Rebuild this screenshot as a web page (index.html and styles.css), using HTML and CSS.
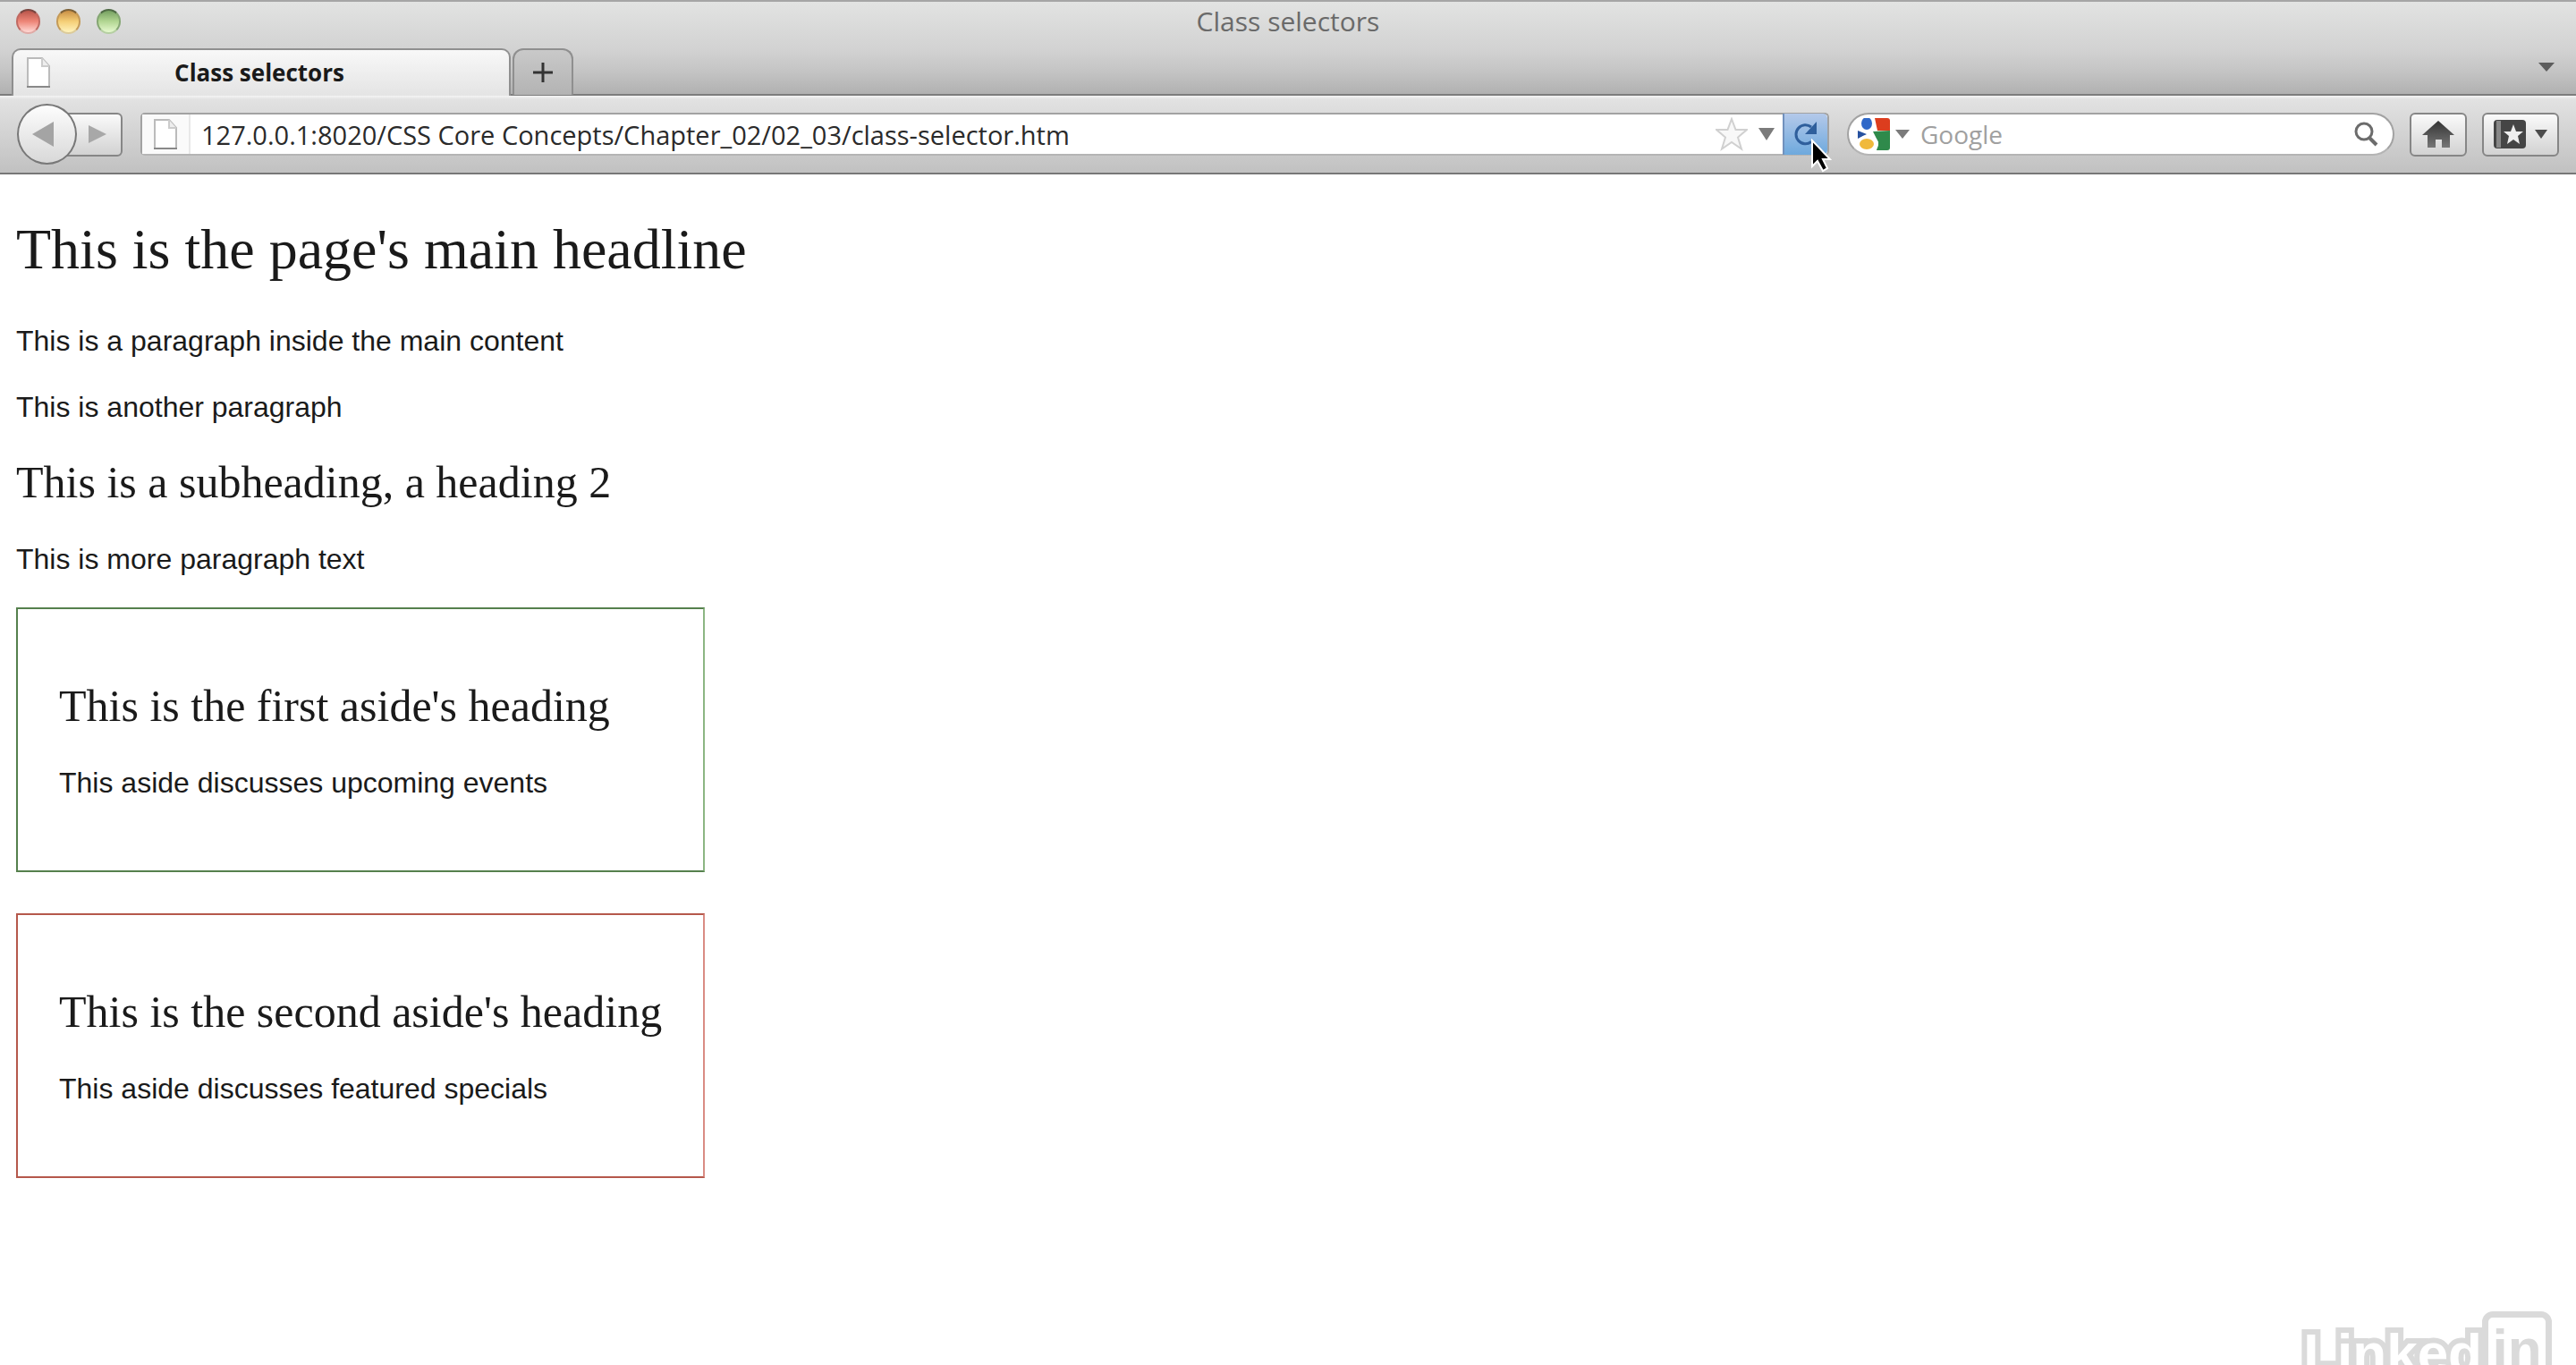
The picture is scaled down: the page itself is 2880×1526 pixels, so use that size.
FILE: index.html
```html
<!DOCTYPE html>
<html lang="en">
<head>
<meta charset="utf-8">
<title>Class selectors</title>
<link rel="stylesheet" href="styles.css">
</head>
<body>
<header class="chrome">
  <div class="titlebar">
    <div class="lights">
      <button class="light red" aria-label="Close"></button>
      <button class="light yellow" aria-label="Minimize"></button>
      <button class="light green" aria-label="Zoom"></button>
    </div>
    <div class="window-title">Class selectors</div>
  </div>
  <div class="tabs">
    <button class="tab">
      <svg class="page-icon" viewBox="0 0 28 36"><path d="M2 2h16l8 9v23H2z" fill="#fff" stroke="#bbb" stroke-width="2"/><path d="M18 2v9h8" fill="#eee" stroke="#ccc" stroke-width="2"/><path d="M1 34h26" stroke="#888" stroke-width="2"/></svg>
      <span class="tab-label">Class selectors</span>
    </button>
    <button class="new-tab" aria-label="New tab"><svg viewBox="0 0 24 24" width="24" height="24"><path d="M12 1v22M1 12h22" stroke="#333" stroke-width="3"/></svg></button>
    <button class="all-tabs" aria-label="List all tabs"><svg viewBox="0 0 18 10" width="18" height="10"><path d="M0 0h18l-9 10z" fill="#5c5c5c"/></svg></button>
  </div>
  <div class="toolbar">
    <div class="history">
      <button class="back" aria-label="Back"><svg viewBox="0 0 24 28" width="24" height="28"><path d="M24 0v28L0 14z" fill="#a4a4a4"/></svg></button>
      <button class="forward" aria-label="Forward"><svg viewBox="0 0 20 20" width="20" height="20"><path d="M0 0v20l20-10z" fill="#a8a8a8"/></svg></button>
    </div>
    <form class="location">
      <span class="identity"><svg class="page-icon" viewBox="0 0 28 36"><path d="M2 2h16l8 9v23H2z" fill="#fff" stroke="#bbb" stroke-width="2"/><path d="M18 2v9h8" fill="#eee" stroke="#ccc" stroke-width="2"/><path d="M1 34h26" stroke="#888" stroke-width="2"/></svg></span>
      <input class="url" type="text" aria-label="Address" value="127.0.0.1:8020/CSS Core Concepts/Chapter_02/02_03/class-selector.htm">
      <button class="plain" type="button" aria-label="Bookmark this page"><svg viewBox="0 0 36 38" width="36" height="38"><path d="M18 2l4.500 12H35l-10 8.500 4 13-11-7.500-11 7.500 4-13L1 14h12.500z" fill="#f8f8f8" stroke="#d0d0d0" stroke-width="2"/></svg></button>
      <button class="plain" type="button" aria-label="Show history"><svg viewBox="0 0 18 14" width="18" height="14"><path d="M0 0h18l-9 14z" fill="#7b7b7b"/></svg></button>
      <button class="reload" type="button" aria-label="Reload">
        <svg viewBox="0 0 28 28" width="28" height="28"><path d="M20 22.500A10.500 10.500 0 1 1 20 6" fill="none" stroke="#2f5f9c" stroke-width="3"/><path d="M26 0v14H13z" fill="#2f5f9c"/></svg>
        <svg class="cursor" viewBox="0 0 24 38" width="24" height="38"><path d="M2 2v29l6-6 6 11 5-3-5-10h8z" fill="#000" stroke="#fff" stroke-width="2"/></svg>
      </button>
    </form>
    <form class="search">
      <button class="engine" type="button" aria-label="Search engine">
        <svg viewBox="0 0 36 36" width="36" height="36"><rect width="36" height="36" rx="3" fill="#fff"/><path d="M19 0h14q3 0 3 3v11H22z" fill="#dc3d1e"/><path d="M17 15l19-1v19q0 3-3 3H21l2-9z" fill="#2f8a4b"/><path d="M0 14l10 4-10 5z" fill="#2752a0"/><circle cx="10" cy="6" r="9" fill="#fff"/><ellipse cx="10" cy="6" rx="6" ry="7" fill="#2f68c8"/><ellipse cx="11" cy="29" rx="12" ry="10" fill="#fff"/><ellipse cx="10" cy="29" rx="8" ry="6" fill="#f0b93c"/></svg>
        <svg viewBox="0 0 16 10" width="16" height="10"><path d="M0 0h16l-8 10z" fill="#7b7b7b"/></svg>
      </button>
      <input class="query" type="text" aria-label="Search" placeholder="Google">
      <button class="plain" type="button" aria-label="Go"><svg viewBox="0 0 28 30" width="28" height="30"><circle cx="12" cy="12" r="9" fill="none" stroke="#6c6c6c" stroke-width="3"/><path d="M18 19l8 8" stroke="#6c6c6c" stroke-width="4"/></svg></button>
    </form>
    <button class="tool home" aria-label="Home"><svg viewBox="0 0 36 30" width="36" height="30"><defs><linearGradient id="ink" x2="0" y2="1"><stop stop-color="#333"/><stop offset="1" stop-color="#777"/></linearGradient></defs><path d="M18 0l18 16h-5v14h-9v-9h-7v9H6V16H0z" fill="url(#ink)"/></svg></button>
    <button class="tool bookmarks" aria-label="Bookmarks">
      <svg viewBox="0 0 36 32" width="36" height="32"><rect width="36" height="32" rx="4" fill="#454545"/><path d="M3 1h5v30H3z" fill="#888"/><path d="M22 5l3 8h8l-6 5 2 9-7-5-7 5 2-9-6-5h8z" fill="#eee"/></svg>
      <svg viewBox="0 0 14 10" width="14" height="10"><path d="M0 0h14l-7 10z" fill="#4c4c4c"/></svg>
    </button>
  </div>
</header>
<main class="page">
  <article class="content">
    <h1>This is the page's main headline</h1>
    <p>This is a paragraph inside the main content</p>
    <p>This is another paragraph</p>
    <h2>This is a subheading, a heading 2</h2>
    <p>This is more paragraph text</p>
  </article>
  <aside class="note events">
    <h2>This is the first aside's heading</h2>
    <p>This aside discusses upcoming events</p>
  </aside>
  <aside class="note specials">
    <h2>This is the second aside's heading</h2>
    <p>This aside discusses featured specials</p>
  </aside>
  <div class="watermark"><span class="linked">Linked</span><span class="in">in</span></div>
</main>
</body>
</html>
```

FILE: styles.css
```css
* { box-sizing: border-box; }

body {
  margin: 0;
  min-height: 100vh;
  display: flex;
  flex-direction: column;
  background: #fff;
  color: #1a1a1a;
  font-family: Arial, "Liberation Sans", sans-serif;
}

button {
  margin: 0;
  padding: 0;
  border: 0;
  background: none;
  font: inherit;
  color: inherit;
}

svg { display: block; flex: none; }

/* Browser window */
.chrome {
  font-family: "Lucida Grande", "Open Sans", sans-serif;
  font-size: 28px;
  border-top: 2px solid #a5a5a5;
  background: linear-gradient(#e2e3e2, #d2d2d2 54px, #c4c4c4 78px, #b0b0b0 104px);
}

.titlebar {
  display: grid;
  grid-template-columns: 1fr auto 1fr;
  height: 52px;
  padding: 0 18px;
}

.lights {
  display: flex;
  gap: 18px;
  padding-top: 8px;
}

.light {
  width: 27px;
  height: 28px;
  border-radius: 50%;
  border: 2px solid;
}

.red { background: linear-gradient(#b9554a, #ee8678 50%, #ffd9d5); border-color: #7a4640 #c06a62 #e0aaa6; }
.yellow { background: linear-gradient(#c98f45, #f5cf77 50%, #fff3bd); border-color: #7e6238 #c49a58 #dccb9a; }
.green { background: linear-gradient(#76a061, #b2d692 50%, #e6f9cf); border-color: #4f6b45 #85a673 #b5cfa2; }

.window-title { color: #6a6a6a; font-size: 30px; line-height: 44px; }

.tabs {
  display: flex;
  align-items: flex-start;
  height: 53px;
  padding: 0 24px 0 13px;
  border-bottom: 2px solid #7d7d7d;
}

.page-icon { width: 28px; height: 36px; }

.tab {
  display: flex;
  align-items: center;
  width: 558px;
  height: 53px;
  padding: 0 14px 2px;
  border: 2px solid #8f8f8f;
  border-bottom: 0;
  border-radius: 10px 10px 0 0;
  background: linear-gradient(#f8f8f8, #e4e4e4);
}

.tab-label {
  flex: 1;
  padding-right: 32px;
  font-size: 26px;
  font-weight: 700;
}

.new-tab {
  display: flex;
  align-items: center;
  justify-content: center;
  width: 68px;
  height: 52px;
  margin-left: 2px;
  border: 2px solid #8f8f8f;
  border-bottom: 0;
  border-radius: 12px 12px 0 0;
  background: linear-gradient(#c9c9c9, #b3b3b3);
}

.all-tabs { margin: 16px 0 0 auto; }

.toolbar {
  display: flex;
  align-items: center;
  height: 88px;
  padding: 0 19px;
  border-bottom: 2px solid #777;
  background: linear-gradient(#f4f4f4, #e2e2e2 4px, #c1c1c1);
}

.history { display: flex; align-items: center; }

.back {
  z-index: 1;
  display: flex;
  align-items: center;
  width: 67px;
  height: 68px;
  padding-left: 15px;
  border: 2px solid #787878;
  border-radius: 50%;
  background: linear-gradient(#fdfdfd, #d8d8d8);
}

.forward {
  display: flex;
  align-items: center;
  width: 64px;
  height: 49px;
  margin-left: -13px;
  padding-left: 24px;
  border: 2px solid #868686;
  border-radius: 0 6px 6px 0;
  background: linear-gradient(#fafafa, #d2d2d2);
}

.location {
  flex: 1;
  display: flex;
  align-items: center;
  gap: 12px;
  min-width: 0;
  height: 48px;
  margin-left: 20px;
  border: 2px solid #a2a2a2;
  border-bottom-color: #b4b4b4;
  border-radius: 5px;
  background: #fff;
}

.identity {
  display: flex;
  align-items: center;
  height: 44px;
  padding: 0 12px;
  border-right: 2px solid #e8e8e8;
  background: #fafafa;
}

.url, .query {
  flex: 1;
  min-width: 0;
  height: 44px;
  padding: 0;
  border: 0;
  outline: 0;
  background: none;
  font: inherit;
  color: #2a2a2a;
}

.url { font-size: 29px; }

.reload {
  position: relative;
  display: flex;
  align-items: center;
  width: 50px;
  height: 46px;
  margin-left: -3px;
  padding-left: 10px;
  border-left: 2px solid #7191bd;
  border-radius: 0 5px 5px 0;
  background: linear-gradient(#b4c9ea, #6ea9dd);
}

.cursor {
  position: absolute;
  left: 29px;
  top: 28px;
}

.search {
  display: flex;
  align-items: center;
  gap: 12px;
  width: 21.250vw;
  height: 48px;
  margin-left: 20px;
  padding: 0 16px 0 10px;
  border: 2px solid #a2a2a2;
  border-bottom-color: #b4b4b4;
  border-radius: 24px;
  background: #fff;
}

.engine { display: flex; align-items: center; gap: 6px; }

.query::placeholder { color: #a0a0a0; opacity: 1; }

.tool {
  display: flex;
  align-items: center;
  justify-content: center;
  gap: 10px;
  height: 49px;
  margin-left: 17px;
  border: 2px solid #868686;
  border-radius: 6px;
  background: linear-gradient(#fafafa, #d2d2d2);
}

.home { width: 64px; }
.bookmarks { width: 86px; }

/* Document shown in the window */
.page {
  position: relative;
  flex: 1;
  overflow: hidden;
  padding: 48px 18px;
}

h1, h2 {
  font-family: Georgia, "Liberation Serif", serif;
  font-weight: 400;
}

h1 { margin: 0 0 48px; font-size: 64px; line-height: 72px; }
h2 { margin: 0 0 40px; font-size: 50px; line-height: 56px; }
p { margin: 0 0 38px; font-size: 32px; line-height: 36px; }

.content p:last-child { margin-bottom: 36px; }

.note {
  width: 770px;
  max-width: 100%;
  margin-bottom: 46px;
  padding: 80px 20px 80px 46px;
  border: 2px solid;
}

.note p { margin: 0; }

.events { border-color: #55804d #8cb683 #55804d #55804d; }
.specials { border-color: #b5584b #d98c84 #b5584b #b5584b; }

.watermark {
  position: absolute;
  right: 27px;
  bottom: -22px;
  display: flex;
  align-items: flex-end;
  font-weight: 700;
  font-size: 62px;
  line-height: 70px;
}

.linked {
  color: #fff;
  -webkit-text-stroke: 12px #dadada;
  paint-order: stroke fill;
}

.in {
  width: 78px;
  height: 82px;
  border: 7px solid #dadada;
  border-radius: 12px;
  background: #fff;
  color: #dadada;
  text-align: center;
}
```
